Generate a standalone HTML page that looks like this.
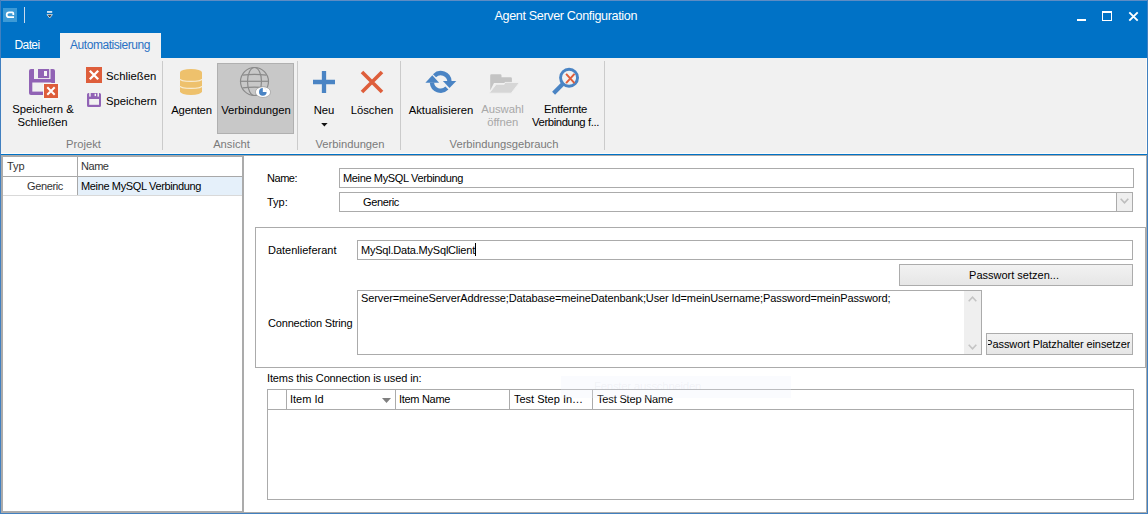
<!DOCTYPE html>
<html><head><meta charset="utf-8">
<style>
*{margin:0;padding:0;box-sizing:border-box}
html,body{width:1148px;height:514px;overflow:hidden;background:#fff}
body{position:relative;font-family:"Liberation Sans",sans-serif;font-size:11px;color:#000}
.a{position:absolute}
.t{position:absolute;white-space:nowrap;line-height:1}
#title{left:0;top:0;width:1148px;height:58px;background:#0072c6}
.rb{font-size:11.3px;color:#000}
.cc{width:120px;text-align:center}
.gl{font-size:11.2px;color:#7a7a7a;width:140px;text-align:center}
.sep{position:absolute;width:1px;background:#cbcbcb}
.c11{font-size:11px;color:#000}
.btn{position:absolute;border:1px solid #acacac;background:linear-gradient(#f2f2f2,#e6e6e6)}
.bx{position:absolute;border:1px solid #ababab;background:#fff}
</style></head><body>
<!-- title bar -->
<div id="title" class="a"></div>
<div class="a" style="left:0;top:0;width:1148px;height:1px;background:#5d8cc4"></div>
<!-- app icon -->
<div class="a" style="left:3px;top:8px;width:14px;height:14px;background:#3d9ad6"></div>
<svg class="a" style="left:3px;top:8px" width="14" height="14" viewBox="0 0 14 14"><path d="M10.3 6.9 V5.2 Q10.3 4.25 9.4 4.25 H6.15 A2.475 2.475 0 0 0 6.15 9.2 H11" fill="none" stroke="#fff" stroke-width="1.75"/></svg>
<div class="a" style="left:24px;top:7px;width:1px;height:16px;background:#c9d9ec"></div>
<svg class="a" style="left:46px;top:10px" width="8" height="10" viewBox="0 0 8 10"><rect x="1" y="1.2" width="5.2" height="1.5" fill="#fff"/><path d="M1 4.6 H6.4 L3.7 8 Z" fill="#3b3b3b" stroke="#fff" stroke-width="0.7"/></svg>
<div class="t" style="left:494.5px;top:9.5px;font-size:12.6px;letter-spacing:-0.36px;color:#fff">Agent Server Configuration</div>
<!-- window controls -->
<div class="a" style="left:1077px;top:19px;width:9px;height:2px;background:#fff"></div>
<div class="a" style="left:1102px;top:11px;width:10px;height:10px;border:1px solid #fff;border-top-width:2px"></div>
<svg class="a" style="left:1128px;top:11px" width="11" height="11" viewBox="0 0 11 11"><path d="M1.3 1.3 L9.7 9.7 M9.7 1.3 L1.3 9.7" stroke="#fff" stroke-width="1.9"/></svg>

<!-- tabs -->
<div class="t" style="left:14.5px;top:39px;font-size:12px;letter-spacing:-0.6px;color:#fff">Datei</div>
<div class="a" style="left:60px;top:33px;width:101px;height:25px;background:#f1f1f1"></div>
<div class="t" style="left:70px;top:39px;font-size:12px;letter-spacing:-0.45px;color:#2a72c4">Automatisierung</div>

<!-- ribbon -->
<div class="a" style="left:1px;top:58px;width:1146px;height:96px;background:#f1f1f1"></div>
<div class="a" style="left:1px;top:153px;width:1146px;height:1px;background:#fbfbfb"></div>
<div class="a" style="left:0;top:154px;width:1148px;height:1px;background:#0072c6"></div>

<!-- Projekt group -->
<svg class="a" style="left:28px;top:68px" width="32" height="32" viewBox="0 0 32 32">
 <path d="M3 1 H25 A2 2 0 0 1 27 3 V25 A2 2 0 0 1 25 27 H3 A2 2 0 0 1 1 25 V3 A2 2 0 0 1 3 1Z" fill="#9163b5"/>
 <rect x="4.3" y="14.5" width="19" height="9.1" fill="#f1f1f1"/>
 <rect x="6" y="0" width="4" height="11" fill="#f1f1f1"/>
 <rect x="21.2" y="0" width="1.3" height="11" fill="#f1f1f1"/>
 <rect x="9" y="10" width="13" height="0.9" fill="#f1f1f1"/>
 <rect x="16" y="3" width="3" height="5" fill="#f6f6f6"/>
 <rect x="15" y="15" width="17" height="17" fill="#f8f8f8"/>
 <rect x="16" y="16" width="14" height="14" fill="#de5e3b"/>
 <path d="M19.3 19.3 L26.7 26.7 M26.7 19.3 L19.3 26.7" stroke="#fff" stroke-width="2"/>
</svg>
<div class="t rb cc" style="left:-17px;top:104px">Speichern &amp;</div>
<div class="t rb cc" style="left:-17.5px;top:117px">Schließen</div>
<svg class="a" style="left:86px;top:67px" width="16" height="16" viewBox="0 0 16 16"><rect width="16" height="16" fill="#de5e3b"/><path d="M3.8 3.8 L12.2 12.2 M12.2 3.8 L3.8 12.2" stroke="#fff" stroke-width="2.3"/></svg>
<div class="t rb" style="left:106px;top:71px">Schließen</div>
<svg class="a" style="left:86px;top:92px" width="16" height="16" viewBox="0 0 16 16">
 <path d="M2.5 1 H13.5 A1.5 1.5 0 0 1 15 2.5 V13.5 A1.5 1.5 0 0 1 13.5 15 H2.5 A1.5 1.5 0 0 1 1 13.5 V2.5 A1.5 1.5 0 0 1 2.5 1Z" fill="#9163b5"/>
 <rect x="3.2" y="7" width="9.8" height="5.8" fill="#f1f1f1"/>
 <rect x="3.2" y="0" width="1.5" height="4.6" fill="#f1f1f1"/>
 <rect x="11.5" y="0" width="1.5" height="4.6" fill="#f1f1f1"/>
 <rect x="8.6" y="1.7" width="1.4" height="2.4" fill="#f6f6f6"/>
</svg>
<div class="t rb" style="left:106px;top:96px">Speichern</div>
<div class="t gl" style="left:13.5px;top:139px">Projekt</div>
<div class="sep" style="left:162px;top:61px;height:89px"></div>

<!-- Ansicht group -->
<svg class="a" style="left:175px;top:66px" width="32" height="32" viewBox="0 0 32 32">
 <ellipse cx="16" cy="6.4" rx="11" ry="3.4" fill="#eec16c"/>
 <path d="M5 6.4 V25.5 A11 3.4 0 0 0 27 25.5 V6.4 Z" fill="#eec16c"/>
 <path d="M5 13 A11 2.4 0 0 0 27 13" fill="none" stroke="#f8ecd2" stroke-width="1.1"/>
 <path d="M5 20 A11 2.4 0 0 0 27 20" fill="none" stroke="#f8ecd2" stroke-width="1.1"/>
</svg>
<div class="t rb cc" style="left:131.5px;top:105px;letter-spacing:-0.25px">Agenten</div>
<div class="a" style="left:217px;top:63px;width:77px;height:71px;background:#c8c8c8;border:1px solid #b0b0b0"></div>
<svg class="a" style="left:238px;top:66px" width="34" height="34" viewBox="0 0 34 34">
 <g fill="none" stroke="#8a8a8a" stroke-width="1.2">
  <circle cx="16.5" cy="15.5" r="14"/>
  <ellipse cx="16.5" cy="15.5" rx="7" ry="14"/>
  <path d="M2.5 15.3 H30.5"/>
  <path d="M4.5 9.2 Q16.5 7.6 28.5 9.2"/>
  <path d="M4.5 21.8 Q16.5 20.6 28.5 21.8"/>
 </g>
 <ellipse cx="25" cy="26.1" rx="7.6" ry="5.4" fill="#fff" stroke="#9a9a9a" stroke-width="0.7"/>
 <circle cx="24.8" cy="25.9" r="3.8" fill="#4a84c4"/>
 <path d="M24.8 25.9 V21.7 A4.2 4.2 0 0 1 29 25.9 Z" fill="#fff"/>
</svg>
<div class="t rb cc" style="left:196px;top:105px">Verbindungen</div>
<div class="t gl" style="left:161.5px;top:139px">Ansicht</div>
<div class="sep" style="left:297px;top:61px;height:89px"></div>

<!-- Verbindungen group -->
<svg class="a" style="left:313px;top:71px" width="22" height="22" viewBox="0 0 22 22"><path d="M11 0 V22 M0 11 H22" stroke="#4a84c4" stroke-width="4.3"/></svg>
<div class="t rb cc" style="left:264px;top:105px">Neu</div>
<svg class="a" style="left:320.5px;top:122px" width="7" height="5" viewBox="0 0 7 5"><path d="M0.2 1 H6.6 L3.4 4.4 Z" fill="#111"/></svg>
<svg class="a" style="left:360px;top:70px" width="24" height="24" viewBox="0 0 24 24"><path d="M2 2 L22 22 M22 2 L2 22" stroke="#de5e3b" stroke-width="3.6"/></svg>
<div class="t rb cc" style="left:312px;top:105px">Löschen</div>
<div class="t gl" style="left:280px;top:139px">Verbindungen</div>
<div class="sep" style="left:400px;top:61px;height:89px"></div>

<!-- Verbindungsgebrauch group -->
<svg class="a" style="left:422px;top:66px" width="38" height="32" viewBox="0 0 38 32">
 <path d="M12.5 9.7 A8.75 8.75 0 0 1 27.45 15.2" fill="none" stroke="#4a84c4" stroke-width="4.3"/>
 <path d="M20.9 15 H34.3 L27.5 22.1 Z" fill="#4a84c4"/>
 <path d="M24.9 22.1 A8.75 8.75 0 0 1 9.95 16.6" fill="none" stroke="#4a84c4" stroke-width="4.3"/>
 <path d="M3.4 16.8 H17.1 L10.3 9.3 Z" fill="#4a84c4"/>
</svg>
<div class="t rb cc" style="left:381px;top:105px">Aktualisieren</div>
<svg class="a" style="left:484px;top:64px" width="40" height="36" viewBox="0 0 40 36">
 <path d="M6.2 11.4 Q6.2 10.2 7.4 10.2 H16.3 Q17.5 10.2 17.5 11.4 V13.2 H26.7 Q27.9 13.2 27.9 14.4 V19 H10 L6.2 26.5 Z" fill="#c4c4c4"/>
 <path d="M5.2 29.2 L12.2 20.3 H20.2 L21 18.4 H35.5 L27.2 29.2 Z" fill="#d6d6d6" stroke="#f1f1f1" stroke-width="0.9"/>
</svg>
<div class="t rb cc" style="left:442.5px;top:104px;color:#a8a8a8">Auswahl</div>
<div class="t rb cc" style="left:442.75px;top:117px;color:#a8a8a8">öffnen</div>
<svg class="a" style="left:546px;top:62px" width="40" height="38" viewBox="0 0 40 38">
 <circle cx="23.05" cy="15.7" r="8.5" fill="none" stroke="#4a84c4" stroke-width="2.9"/>
 <path d="M17 21.8 L7.6 31.2" stroke="#4a84c4" stroke-width="4.2"/>
 <path d="M20.1 11.8 L28.5 21.1 M28.5 11.8 L20.1 21.1" stroke="#de5e3b" stroke-width="2"/>
</svg>
<div class="t rb cc" style="left:505.5px;top:104px;letter-spacing:-0.3px">Entfernte</div>
<div class="t rb cc" style="left:505.5px;top:117px;letter-spacing:-0.4px">Verbindung f...</div>
<div class="t gl" style="left:434px;top:139px">Verbindungsgebrauch</div>
<div class="sep" style="left:604px;top:61px;height:89px"></div>


<!-- ===== content ===== -->
<!-- left list -->
<div class="a" style="left:1px;top:155px;width:243px;height:358px;border:2px solid #ababab;background:#fff"></div>
<div class="a" style="left:77px;top:157px;width:1px;height:38px;background:#a8a8a8"></div>
<div class="a" style="left:3px;top:176px;width:239px;height:1px;background:#a8a8a8"></div>
<div class="a" style="left:78px;top:177px;width:164px;height:18px;background:#e5f0fa"></div>
<div class="a" style="left:3px;top:195px;width:239px;height:1px;background:#d9d9d9"></div>
<div class="t c11" style="left:7px;top:161px;color:#333">Typ</div>
<div class="t c11" style="left:81px;top:161px;color:#333;letter-spacing:-0.45px">Name</div>
<div class="t c11" style="left:27px;top:181px;color:#333;letter-spacing:-0.36px">Generic</div>
<div class="t c11" style="left:81px;top:181px;letter-spacing:-0.36px">Meine MySQL Verbindung</div>

<!-- right panel -->
<div class="a" style="left:244px;top:155px;width:903px;height:1px;background:#ababab"></div>
<div class="t c11" style="left:267px;top:173px;letter-spacing:-0.45px">Name:</div>
<div class="bx" style="left:339px;top:168px;width:795px;height:20px"></div>
<div class="t c11" style="left:343px;top:173px;letter-spacing:-0.36px">Meine MySQL Verbindung</div>
<div class="t c11" style="left:267px;top:197px">Typ:</div>
<div class="bx" style="left:339px;top:192px;width:794px;height:20px"></div>
<div class="t c11" style="left:363px;top:197px;letter-spacing:-0.36px">Generic</div>
<div class="a" style="left:1116px;top:192px;width:17px;height:20px;border:1px solid #ababab;background:#efefef"></div>
<svg class="a" style="left:1120px;top:198px" width="9" height="6" viewBox="0 0 9 6"><path d="M0.7 0.7 L4.5 4.8 L8.3 0.7" fill="none" stroke="#bdbdbd" stroke-width="1.6"/></svg>

<!-- group box -->
<div class="a" style="left:255px;top:227px;width:891px;height:141px;border:1px solid #ababab"></div>
<div class="t c11" style="left:268px;top:245px">Datenlieferant</div>
<div class="bx" style="left:357px;top:240px;width:776px;height:20px"></div>
<div class="t c11" style="left:361px;top:245px;letter-spacing:-0.21px">MySql.Data.MySqlClient</div>
<div class="a" style="left:475px;top:243px;width:1px;height:13px;background:#000"></div>
<div class="btn" style="left:899px;top:264px;width:234px;height:22px"></div>
<div class="t c11" style="left:897px;top:270px;width:234px;text-align:center">Passwort setzen...</div>
<div class="t c11" style="left:268px;top:318px;letter-spacing:-0.18px">Connection String</div>
<div class="bx" style="left:357px;top:290px;width:625px;height:65px"></div>
<div class="a" style="left:964px;top:291px;width:17px;height:63px;background:#efefef"></div>
<svg class="a" style="left:968px;top:296px" width="9" height="6" viewBox="0 0 9 6"><path d="M0.7 5.3 L4.5 1.2 L8.3 5.3" fill="none" stroke="#c4c4c4" stroke-width="1.6"/></svg>
<svg class="a" style="left:968px;top:344px" width="9" height="6" viewBox="0 0 9 6"><path d="M0.7 0.7 L4.5 4.8 L8.3 0.7" fill="none" stroke="#c4c4c4" stroke-width="1.6"/></svg>
<div class="t c11" style="left:361px;top:293px;letter-spacing:-0.11px">Server=meineServerAddresse;Database=meineDatenbank;User Id=meinUsername;Password=meinPassword;</div>
<div class="btn" style="left:986px;top:333px;width:147px;height:22px"></div>
<div class="a" style="left:988px;top:334px;width:142px;height:20px;overflow:hidden"><div class="t c11" style="left:-4px;top:5px;width:150px;text-align:center;letter-spacing:-0.1px">Passwort Platzhalter einsetzen</div></div>

<!-- items grid -->
<div class="t c11" style="left:267px;top:373px;letter-spacing:-0.12px">Items this Connection is used in:</div>
<div class="bx" style="left:267px;top:389px;width:867px;height:111px"></div>
<div class="a" style="left:268px;top:409px;width:865px;height:1px;background:#ababab"></div>
<div class="a" style="left:286px;top:390px;width:1px;height:19px;background:#ababab"></div>
<div class="a" style="left:395px;top:390px;width:1px;height:19px;background:#ababab"></div>
<div class="a" style="left:509px;top:390px;width:1px;height:19px;background:#ababab"></div>
<div class="a" style="left:592px;top:390px;width:1px;height:19px;background:#ababab"></div>
<div class="t c11" style="left:290px;top:394px">Item Id</div>
<svg class="a" style="left:382px;top:398px" width="9" height="5" viewBox="0 0 9 5"><path d="M0 0 H9 L4.5 5 Z" fill="#7f7f7f"/></svg>
<div class="t c11" style="left:399px;top:394px;letter-spacing:-0.3px">Item Name</div>
<div class="t c11" style="left:514px;top:394px">Test Step In…</div>
<div class="t c11" style="left:597px;top:394px;letter-spacing:-0.16px">Test Step Name</div>

<div class="a" style="left:561px;top:376px;width:230px;height:22px;background:rgba(235,240,250,0.25)"></div>
<div class="t" style="left:594px;top:381px;font-size:11.5px;letter-spacing:-0.3px;color:rgba(180,185,200,0.13)">Fenster ausschneiden</div>
<div class="a" style="left:1146px;top:155px;width:1px;height:358px;background:#ababab"></div>
<div class="a" style="left:244px;top:512px;width:903px;height:1px;background:#ababab"></div>
<div class="a" style="left:1146px;top:58px;width:1px;height:96px;background:#fcfaf6"></div>
<!-- window borders -->
<div class="a" style="left:0;top:0;width:1px;height:514px;background:#4180c0"></div>
<div class="a" style="left:1147px;top:0;width:1px;height:514px;background:#4180c0"></div>
<div class="a" style="left:0;top:513px;width:1148px;height:1px;background:#4180c0"></div>
</body></html>
